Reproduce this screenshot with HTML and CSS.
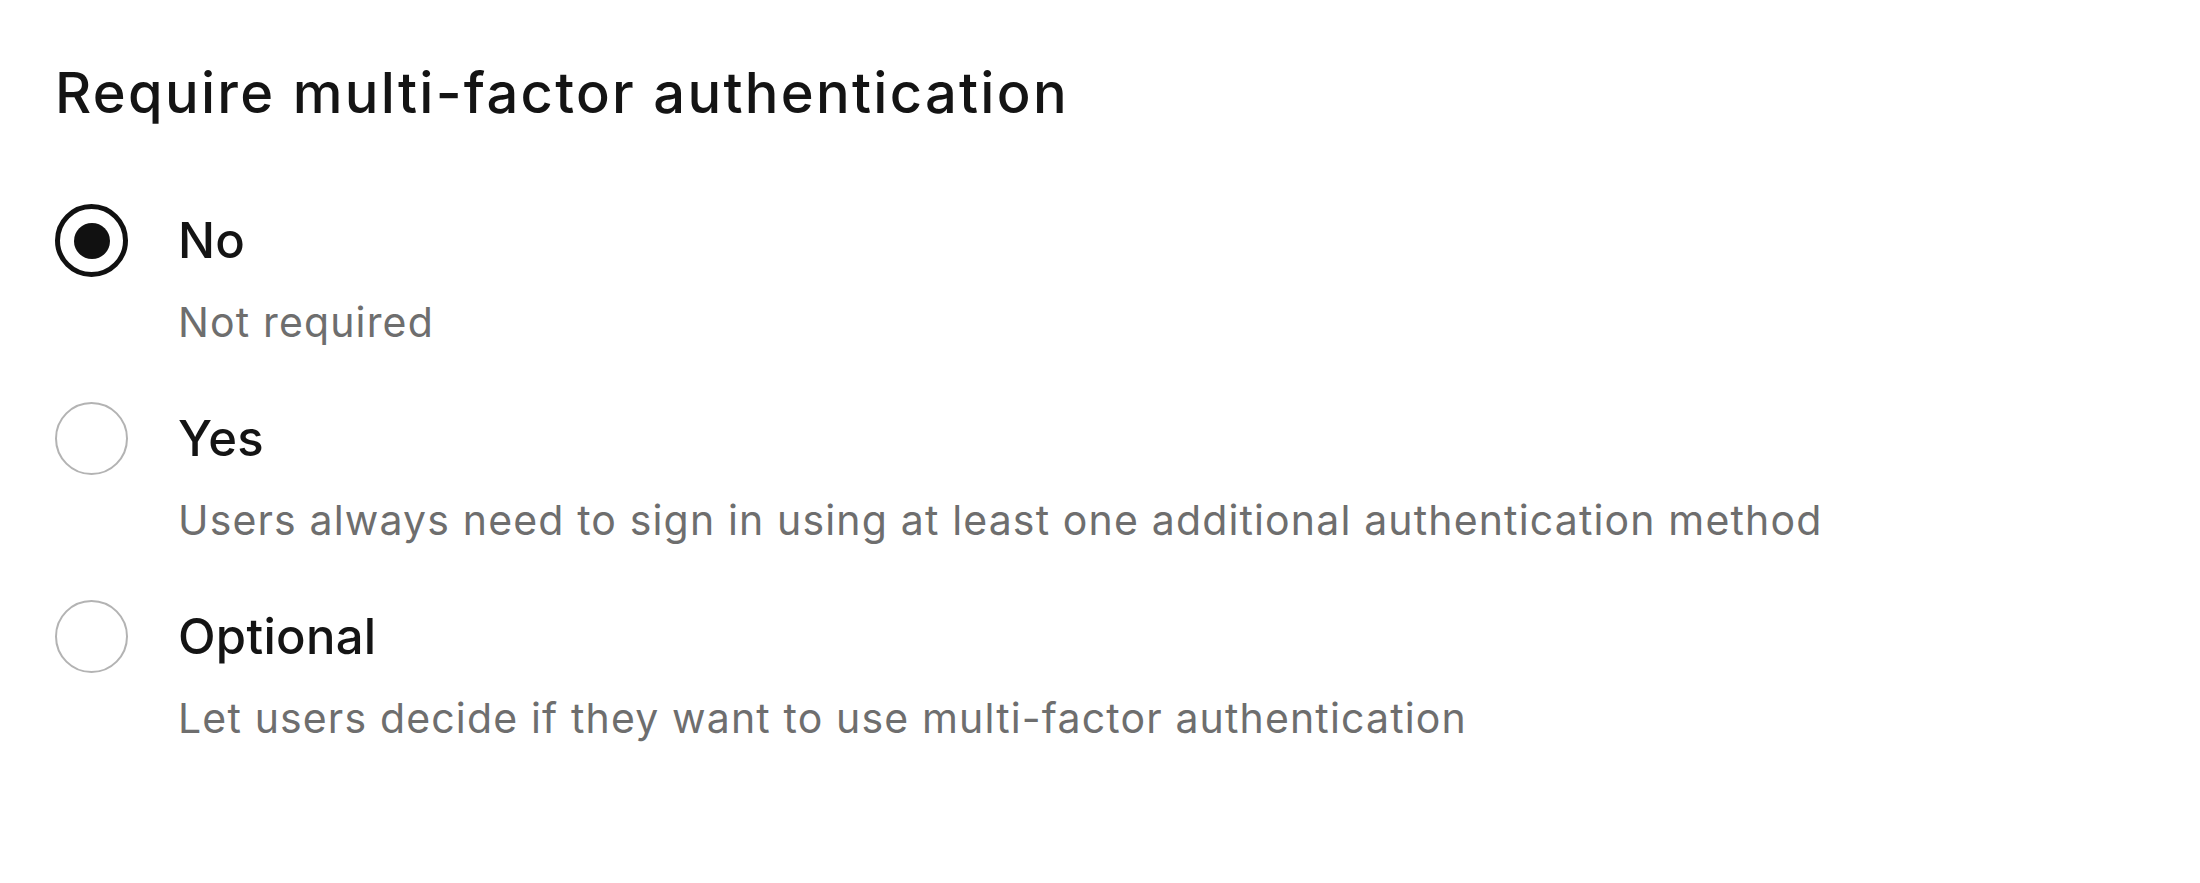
FILE: index.html
```html
<!DOCTYPE html>
<html lang="en">
<head>
<meta charset="utf-8">
<title>Require multi-factor authentication</title>
<link rel="stylesheet" href="styles.css">
</head>
<body>
<main class="panel">
  <h1 class="title">Require multi-factor authentication</h1>
  <div class="options" role="radiogroup">
    <label class="option">
      <span class="radio radio--checked"><span class="dot"></span></span>
      <span class="label">No</span>
      <span class="desc">Not required</span>
    </label>
    <label class="option">
      <span class="radio"></span>
      <span class="label">Yes</span>
      <span class="desc">Users always need to sign in using at least one additional authentication method</span>
    </label>
    <label class="option">
      <span class="radio"></span>
      <span class="label">Optional</span>
      <span class="desc">Let users decide if they want to use multi-factor authentication</span>
    </label>
  </div>
</main>
</body>
</html>
```
FILE: styles.css
```css
* { box-sizing: border-box; }
html, body { margin: 0; padding: 0; background: #ffffff; }
body {
  font-family: Inter, "Noto Sans", "Liberation Sans", sans-serif;
  color: #141414;
}
.panel {
  padding: 59px 0 0 55px;
}
.title {
  margin: 0;
  font-size: 56px;
  line-height: 68px;
  font-weight: 500;
  letter-spacing: 2.3px;
  color: #141414;
}
.options {
  margin-top: 77px;
  display: flex;
  flex-direction: column;
  gap: 50px;
}
.option {
  display: grid;
  grid-template-columns: 73px auto;
  column-gap: 50px;
  row-gap: 15px;
  align-items: center;
}
.radio {
  grid-column: 1;
  grid-row: 1;
  width: 73px;
  height: 73px;
  border-radius: 50%;
  border: 2.5px solid #b3b3b3;
  background: #fff;
  display: flex;
  align-items: center;
  justify-content: center;
}
.radio--checked {
  border: 5px solid #111111;
}
.dot {
  width: 36px;
  height: 36px;
  border-radius: 50%;
  background: #111111;
}
.label {
  grid-column: 2;
  grid-row: 1;
  font-size: 49px;
  line-height: 73px;
  font-weight: 500;
  letter-spacing: 0.3px;
  color: #141414;
}
.desc {
  grid-column: 2;
  grid-row: 2;
  font-size: 41px;
  line-height: 60px;
  font-weight: 400;
  letter-spacing: 1.15px;
  color: #6e6e6e;
}
```
